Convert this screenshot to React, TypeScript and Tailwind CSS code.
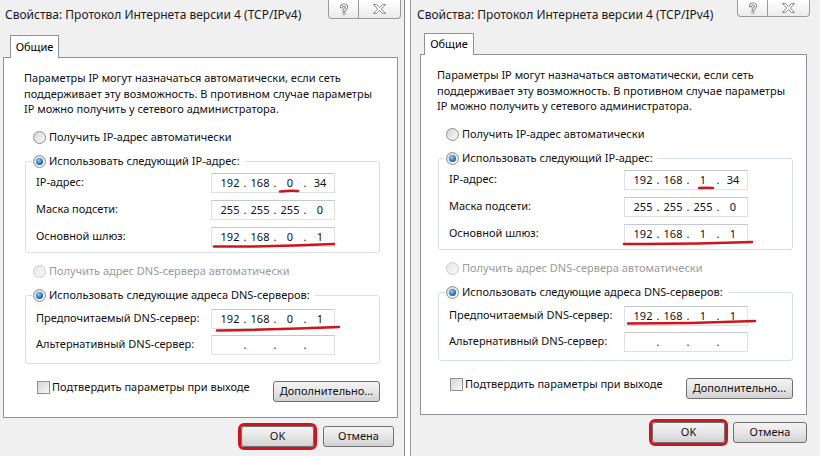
import { Fragment } from "react";

const font = { fontFamily: '"Noto Sans", "Open Sans", sans-serif' };

function Radio({ checked, disabled }: { checked?: boolean; disabled?: boolean }) {
  return (
    <span
      className={
        disabled
          ? "inline-flex h-[13px] w-[13px] shrink-0 items-center justify-center rounded-full border border-[#c9c9c9] bg-linear-to-br from-[#e6e6e6] to-[#f8f8f8]"
          : "inline-flex h-[13px] w-[13px] shrink-0 items-center justify-center rounded-full border border-[#8e8f8f] bg-linear-to-br from-[#d4d4d4] to-[#fbfbfb]"
      }
    >
      {checked && (
        <span className="h-[7px] w-[7px] rounded-full bg-[radial-gradient(circle_at_40%_35%,#8fd0f8,#2a75b8_55%,#0e3b6a)]" />
      )}
    </span>
  );
}

function CaptionButtons({ right }: { right?: boolean }) {
  return (
    <div className={right ? "flex h-[17px]" : "flex h-[19px]"}>
      <div className="flex w-[31px] items-center justify-center rounded-bl-[4px] border border-t-0 border-[#9a9a9a] bg-linear-to-b from-white to-[#ececec]">
        <svg width="10" height="12" viewBox="0 0 10 12">
          <path d="M2.5 4 C2.5 1.2 7.5 1.2 7.5 4 C7.5 6 5 6 5 8" fill="none" stroke="#7a7a7a" strokeWidth="3" strokeLinecap="round" />
          <path d="M2.5 4 C2.5 1.2 7.5 1.2 7.5 4 C7.5 6 5 6 5 8" fill="none" stroke="#fff" strokeWidth="1.2" strokeLinecap="round" />
          <circle cx="5" cy="10.5" r="1.3" fill="#fff" stroke="#7a7a7a" strokeWidth="0.8" />
        </svg>
      </div>
      <div className="flex w-[42px] items-center justify-center rounded-br-[4px] border border-l-0 border-t-0 border-[#9a9a9a] bg-linear-to-b from-white to-[#ececec]">
        <svg width="13" height="10" viewBox="0 0 13 10">
          <polygon
            points="0.5,0.5 3.5,0.5 6.5,3.6 9.5,0.5 12.5,0.5 8.3,5 12.5,9.5 9.5,9.5 6.5,6.4 3.5,9.5 0.5,9.5 4.7,5"
            fill="#fff"
            stroke="#7a7a7a"
            strokeWidth="0.9"
          />
        </svg>
      </div>
    </div>
  );
}

function IpField({ value, mark }: { value: string[]; mark?: string }) {
  return (
    <div className="relative flex h-[20px] w-[124px] items-center border border-[#dde1e6] border-t-[#c3c8ce] bg-white pl-[6px] text-[11px] leading-none text-[#111]">
      {value.map((v, i) => (
        <Fragment key={i}>
          {i > 0 && <span className="w-[6px] text-center">.</span>}
          <span className="w-[24px] text-center">{v}</span>
        </Fragment>
      ))}
      {mark && (
        <svg className="pointer-events-none absolute -left-px -top-px overflow-visible" width="124" height="20">
          <path d={mark} fill="none" stroke="#d0141d" strokeWidth="2.5" strokeLinecap="round" />
        </svg>
      )}
    </div>
  );
}

function Row({ label, value, mark }: { label: string; value: string[]; mark?: string }) {
  return (
    <div className="flex h-[20px] items-center pl-[10px]">
      <span className="w-[175px]">{label}</span>
      <IpField value={value} mark={mark} />
    </div>
  );
}

function WinButton({ children, width, ok }: { children: string; width: string; ok?: boolean }) {
  return (
    <div
      className={
        (ok ? "outline-[3px] outline-solid outline-[#d0141d] outline-offset-[0px] " : "") +
        width +
        " flex h-[21px] items-center justify-center rounded-[3px] border border-[#707070] bg-linear-to-b from-[#f4f4f4] via-[#e6e6e6] to-[#d2d2d2] text-[11px] text-[#111]"
      }
    >
      {children}
    </div>
  );
}

type Net = {
  ip: string[];
  gw: string[];
  ipMark: string;
  gwMark: string;
  dnsMark: string;
};

function Dialog({ right, net }: { right?: boolean; net: Net }) {
  return (
    <div
      className={
        right
          ? "flex h-full w-[410px] shrink-0 flex-col border-l border-[#9c9c9c] bg-[#f0f0f0]"
          : "flex h-full w-[405px] shrink-0 flex-col border-r border-[#8a8a8a] bg-[#f0f0f0]"
      }
    >
      <div
        className={
          right
            ? "flex h-[33px] items-start justify-between pl-[6px] pr-[10px]"
            : "flex h-[35px] items-start justify-between pl-[5px] pr-[3px]"
        }
      >
        <span className="pt-[6px] text-[12px] leading-[18px] text-[#1a1a1a]">
          Свойства: Протокол Интернета версии 4 (TCP/IPv4)
        </span>
        <CaptionButtons right={right} />
      </div>

      <div className={right ? "ml-[9px] w-[387px]" : "ml-[3px] w-[395px]"}>
        <div
          className={
            right
              ? "relative z-10 -mb-px ml-[4px] flex h-[22px] w-[50px] items-center justify-center border border-b-0 border-[#8e9199] bg-white text-[11px]"
              : "relative z-10 -mb-px ml-[7px] flex h-[23px] w-[49px] items-center justify-center border border-b-0 border-[#8e9199] bg-white text-[11px]"
          }
        >
          Общие
        </div>
        <div className="border border-[#8e9199] bg-white pb-[15px] pt-[12px]">
          <div className={right ? "ml-[17px] w-[355px] text-[11px] text-[#111]" : "ml-[21px] w-[355px] text-[11px] text-[#111]"}>
            <p className="-ml-px leading-[15.5px]">
              Параметры IP могут назначаться автоматически, если сеть
              <br />
              поддерживает эту возможность. В противном случае параметры
              <br />
              IP можно получить у сетевого администратора.
            </p>

            <div className="mt-[13px] flex h-[16px] items-center gap-[3px] pl-[8px]">
              <Radio />
              <span>Получить IP-адрес автоматически</span>
            </div>

            <fieldset className="mt-[8px] rounded-[3px] border border-[#d5dfe5] pb-[5px] pt-[3px]">
              <legend className="ml-[6px] flex h-[16px] items-center gap-[3px] pl-px pr-[5px]">
                <Radio checked />
                <span>Использовать следующий IP-адрес:</span>
              </legend>
              <div className="flex flex-col gap-[7px]">
                <Row label="IP-адрес:" value={net.ip} mark={net.ipMark} />
                <Row label="Маска подсети:" value={["255", "255", "255", "0"]} />
                <Row label="Основной шлюз:" value={net.gw} mark={net.gwMark} />
              </div>
            </fieldset>

            <div className="mt-[11px] flex h-[16px] items-center gap-[3px] pl-[8px] text-[#9a9a9a]">
              <Radio disabled />
              <span>Получить адрес DNS-сервера автоматически</span>
            </div>

            <fieldset className="mt-[8px] rounded-[3px] border border-[#d5dfe5] pb-[8px] pt-[5px]">
              <legend className="ml-[6px] flex h-[16px] items-center gap-[3px] pl-px pr-[5px]">
                <Radio checked />
                <span>Использовать следующие адреса DNS-серверов:</span>
              </legend>
              <div className="flex flex-col gap-[6px]">
                <Row label="Предпочитаемый DNS-сервер:" value={net.gw} mark={net.dnsMark} />
                <Row label="Альтернативный DNS-сервер:" value={["", "", "", ""]} />
              </div>
            </fieldset>

            <div className="mt-[17px] flex items-start justify-between">
              <div className="flex h-[13px] items-center gap-[2px] pl-[12px]">
                <span className="h-[13px] w-[13px] border border-[#8e8f8f] bg-linear-to-br from-[#d6d6d6] to-[#f7f7f7]" />
                <span>Подтвердить параметры при выходе</span>
              </div>
              <WinButton width="w-[107px]">Дополнительно...</WinButton>
            </div>
          </div>
        </div>
      </div>

      <div
        className={
          right
            ? "mt-[7px] flex justify-end gap-[8px] pr-[13px]"
            : "mt-[8px] flex justify-end gap-[9px] pr-[10px]"
        }
      >
        <WinButton width="w-[73px]" ok>
          OK
        </WinButton>
        <WinButton width={right ? "w-[74px]" : "w-[71px]"}>Отмена</WinButton>
      </div>
    </div>
  );
}

export default function App() {
  return (
    <div className="flex h-[456px] w-[820px] gap-[5px] overflow-hidden bg-white" style={font}>
      <Dialog
        net={{
          ip: ["192", "168", "0", "34"],
          gw: ["192", "168", "0", "1"],
          ipMark: "M69 18.5 Q78 17.5 87 18",
          gwMark: "M3 19.5 Q60 20 123 17",
          dnsMark: "M6 21.5 Q70 20.5 128 18",
        }}
      />
      <Dialog
        right
        net={{
          ip: ["192", "168", "1", "34"],
          gw: ["192", "168", "1", "1"],
          ipMark: "M75 18 Q82 17.5 89 18",
          gwMark: "M0 20 Q64 20.5 128 18",
          dnsMark: "M4 17.5 Q66 17.5 131 15",
        }}
      />
    </div>
  );
}
